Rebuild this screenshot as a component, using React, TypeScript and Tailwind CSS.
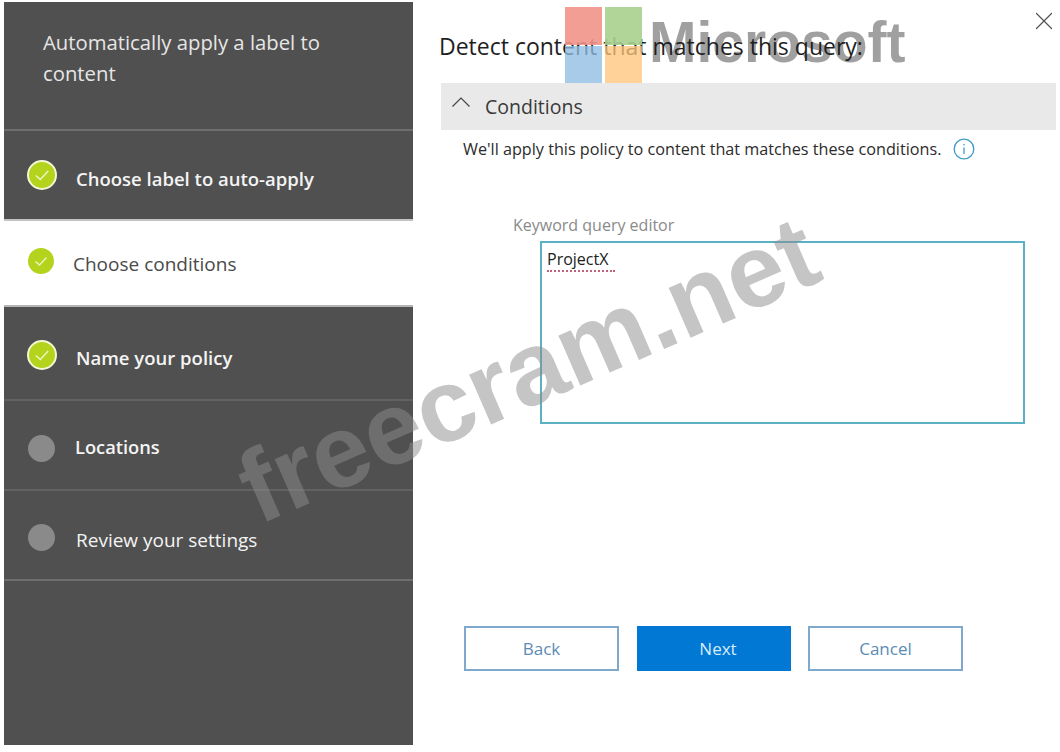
import type { ReactNode } from 'react';
import { X } from 'lucide-react';

const uiFont = "font-['Open_Sans','Noto_Sans',sans-serif]";

function CheckDot({ className = '' }: { className?: string }) {
  return (
    <div
      className={[
        'flex h-[30px] w-[30px] shrink-0 items-center justify-center rounded-full border-2 border-[#f2f7d4] bg-[#b4d31c]',
        className,
      ].join(' ')}
    >
      <svg viewBox="0 0 16 16" className="h-[18px] w-[18px]" fill="none" stroke="#eef5c4" strokeWidth="1.3">
        <path d="M2.5 8.5 L6.5 12 L13.5 4.5" />
      </svg>
    </div>
  );
}

function GrayDot({ className = '' }: { className?: string }) {
  return <div className={['ml-[1px] h-[27px] w-[27px] shrink-0 rounded-full bg-[#8a8a8a]', className].join(' ')} />;
}

function Step({ height, icon, children }: { height: string; icon: ReactNode; children: ReactNode }) {
  return (
    <div className={['flex items-center pl-[23px]', height].join(' ')}>
      {icon}
      {children}
    </div>
  );
}

function FooterButton({ label, className }: { label: string; className: string }) {
  return (
    <button type="button" className={['h-[45px] text-[17px]', className].join(' ')}>
      {label}
    </button>
  );
}

export default function App() {
  return (
    <div className={`relative h-[752px] w-[1060px] overflow-hidden bg-white ${uiFont}`}>
      {/* logo wordmark sits under the dialog title */}
      <div className="absolute left-[649px] top-[6px] font-['Liberation_Sans',sans-serif] text-[57px] font-bold leading-[72px] text-[#808080]/75">
        Microsoft
      </div>

      <div className="relative z-10 flex h-full">
        <aside className="mb-[7px] ml-[4px] mt-[2px] flex w-[409px] flex-col">
          <div className="h-[129px] border-b-2 border-[#6e6e6e] bg-[#505050] pl-[39px] pt-[25px]">
            <p className="w-[320px] text-[20.3px] leading-[31px] text-[#e6e6e6]">Automatically apply a label to content</p>
          </div>
          <div className="bg-[#505050]">
            <Step height="h-[88px]" icon={<CheckDot className="mb-[1px]" />}>
              <span className="ml-[19px] mt-[7px] text-[18.5px] font-semibold text-[#f4f4f4]">Choose label to auto-apply</span>
            </Step>
          </div>
          <div className="flex h-[88px] items-center border-y-2 border-t-[#c4c4c4] border-b-[#b5b5b5] bg-white pl-[24px]">
            <div className="mb-[4px] flex h-[26px] w-[26px] shrink-0 items-center justify-center rounded-full bg-[#b4d31c]">
              <svg viewBox="0 0 16 16" className="h-[16px] w-[16px]" fill="none" stroke="#eef5c4" strokeWidth="1.3">
                <path d="M2.5 8.5 L6.5 12 L13.5 4.5" />
              </svg>
            </div>
            <span className="ml-[19px] mt-[2px] text-[19px] text-[#4a4a4a]">Choose conditions</span>
          </div>
          <div className="flex flex-1 flex-col bg-[#505050]">
            <Step height="h-[94px] border-b-2 border-[#626262]" icon={<CheckDot className="mt-[3px]" />}>
              <span className="ml-[19px] mt-[9px] text-[18.5px] font-semibold text-[#f4f4f4]">Name your policy</span>
            </Step>
            <Step height="h-[90px] border-b-2 border-[#626262]" icon={<GrayDot className="mt-[6px]" />}>
              <span className="ml-[20px] mt-[4px] text-[18.3px] font-semibold text-[#f4f4f4]">Locations</span>
            </Step>
            <Step height="h-[90px] border-b-2 border-[#6e6e6e]" icon={<GrayDot className="mt-[4px]" />}>
              <span className="ml-[21px] mt-[10px] text-[19px] font-medium text-[#f4f4f4]">Review your settings</span>
            </Step>
          </div>
        </aside>

        <main className="relative flex-1 pl-[26px]">
          <h1 className="pt-[29px] text-[23px] leading-[34px] text-[#1f1f1f]">Detect content that matches this query:</h1>
          <button type="button" className="absolute right-[1px] top-[6px] text-[#555555]">
            <X size={30} strokeWidth={1} />
          </button>

          <div className="ml-[2px] mt-[20px] flex h-[47px] w-[615px] items-center gap-[14px] bg-[#e9e9e9] pl-[10px]">
            <svg viewBox="0 0 20 12" className="mb-[10px] h-[12px] w-[20px]" fill="none" stroke="#444444" strokeWidth="1.2">
              <path d="M1.5 10.5 L10 2 L18.5 10.5" />
            </svg>
            <span className="text-[19.5px] text-[#3a3a3a]">Conditions</span>
          </div>

          <div className="mt-[7px] flex items-center gap-[12px] pl-[24px] text-[16.2px] text-[#2b2b2b]">
            <span>We'll apply this policy to content that matches these conditions.</span>
            <svg viewBox="0 0 22 22" className="h-[22px] w-[22px]" fill="none" stroke="#3d9bc8" strokeWidth="1.3">
              <circle cx="11" cy="11" r="9.8" />
              <path d="M11 9.5 V16 M11 6 V7.6" />
            </svg>
          </div>

          <label className="ml-[74px] mt-[53px] block text-[16px] leading-[22px] text-[#8a8a8a]">Keyword query editor</label>
          <div className="ml-[101px] mt-[5px] h-[183px] w-[485px] border-2 border-[#5bb0c4] px-[5px] pt-[4px]">
            <span className="inline-block border-b-2 border-dotted border-[#c0607a] pr-[7px] text-[16px] leading-[22px] text-[#222222]">ProjectX</span>
          </div>

          <div className="ml-[25px] mt-[202px] flex">
            <FooterButton label="Back" className="w-[155px] border-2 border-[#7fa9cc] bg-white text-[#5b8cb5]" />
            <FooterButton label="Next" className="ml-[18px] w-[154px] bg-[#0078d4] pl-[8px] text-[#d8ecfa]" />
            <FooterButton label="Cancel" className="ml-[17px] w-[155px] border-2 border-[#7fa9cc] bg-white text-[#5b8cb5]" />
          </div>
        </main>
      </div>

      {/* logo squares tint the title text below them */}
      <div className="absolute left-[565px] top-[7px] z-20 flex gap-[3px] opacity-90">
        <div className="flex flex-col gap-[1px]">
          <div className="h-[38px] w-[37px] bg-[#f1948a]" />
          <div className="h-[37px] w-[37px] bg-[#8fbce4]/85" />
        </div>
        <div className="flex flex-col gap-[1px]">
          <div className="h-[38px] w-[37px] bg-[#a9d18e]" />
          <div className="h-[37px] w-[37px] bg-[#ffc67a]/85" />
        </div>
      </div>

      {/* watermark */}
      <div className="absolute left-[219px] top-[320px] z-30 origin-center -rotate-[23.5deg] whitespace-nowrap font-['Liberation_Sans',sans-serif] text-[103px] font-bold leading-[100px] text-[#8b8b8b]/50">
        freecram.net
      </div>
    </div>
  );
}
